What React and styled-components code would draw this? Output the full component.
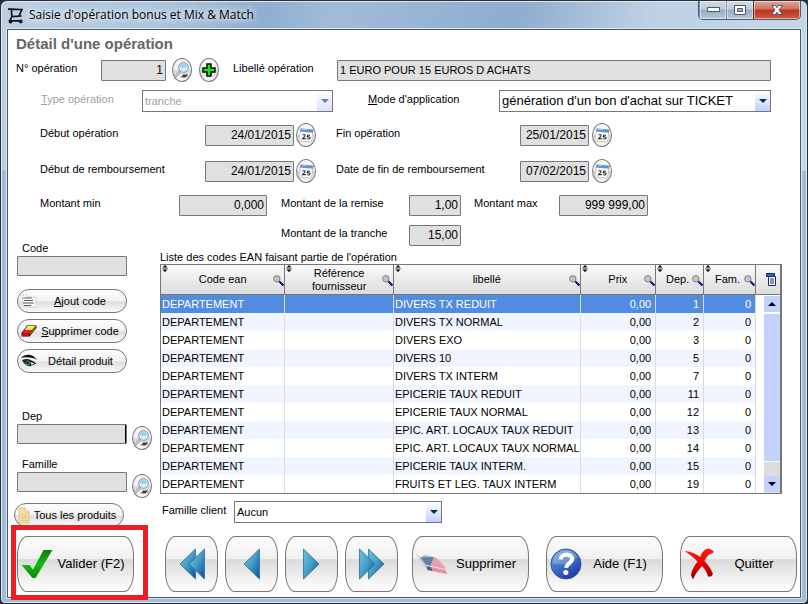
// App.jsx
import React, { useState } from "react";
import styled, { createGlobalStyle } from "styled-components";

const rows = [
  { code: "DEPARTEMENT", ref: "", label: "DIVERS TX REDUIT", price: "0,00", dep: 1, fam: 0 },
  { code: "DEPARTEMENT", ref: "", label: "DIVERS TX NORMAL", price: "0,00", dep: 2, fam: 0 },
  { code: "DEPARTEMENT", ref: "", label: "DIVERS EXO", price: "0,00", dep: 3, fam: 0 },
  { code: "DEPARTEMENT", ref: "", label: "DIVERS 10", price: "0,00", dep: 5, fam: 0 },
  { code: "DEPARTEMENT", ref: "", label: "DIVERS TX INTERM", price: "0,00", dep: 7, fam: 0 },
  { code: "DEPARTEMENT", ref: "", label: "EPICERIE TAUX REDUIT", price: "0,00", dep: 11, fam: 0 },
  { code: "DEPARTEMENT", ref: "", label: "EPICERIE TAUX NORMAL", price: "0,00", dep: 12, fam: 0 },
  { code: "DEPARTEMENT", ref: "", label: "EPIC. ART. LOCAUX TAUX REDUIT", price: "0,00", dep: 13, fam: 0 },
  { code: "DEPARTEMENT", ref: "", label: "EPIC. ART. LOCAUX TAUX NORMAL", price: "0,00", dep: 14, fam: 0 },
  { code: "DEPARTEMENT", ref: "", label: "EPICERIE TAUX INTERM.", price: "0,00", dep: 15, fam: 0 },
  { code: "DEPARTEMENT", ref: "", label: "FRUITS ET LEG. TAUX INTERM", price: "0,00", dep: 19, fam: 0 },
];

const columns = [
  { title: "Code ean", width: 125 },
  { title: "Référence fournisseur", width: 109 },
  { title: "libellé" },
  { title: "Prix", width: 76 },
  { title: "Dep.", width: 48 },
  { title: "Fam.", width: 52 },
];

// ---------- Icons ----------

const CartIcon = () => (
  <svg width="16" height="17" viewBox="0 0 16 17" fill="none" stroke="#111" strokeWidth="1.7">
    <path d="M0 2.2h3.5l9 0.3h2.5M3.3 2.2l0.6 7.4 9.6-0.6M13.8 2.5l-2.6 6.3M4 9.6L1.6 13.8h11.2" />
    <circle cx="2.6" cy="14.6" r="1" fill="#111" />
    <circle cx="12.8" cy="14.4" r="1" fill="#111" />
  </svg>
);

const SearchIcon = () => (
  <svg width="18" height="20" viewBox="0 0 18 20">
    <path d="M9 14.5l6-1 0.5 3.5-7 0.5z" fill="#888" opacity="0.6" />
    <path d="M8.5 16.8h4.5M10 15.4h4" stroke="#222" strokeWidth="1" />
    <path d="M6.8 11.2L2.4 16.6" stroke="#888" strokeWidth="2.4" strokeLinecap="round" />
    <path d="M6.6 11L2.6 16.2" stroke="#e4e4e4" strokeWidth="1.1" strokeLinecap="round" />
    <circle cx="10.5" cy="7.4" r="4.9" fill="#d6eef8" stroke="#8b979f" strokeWidth="1" />
    <path d="M6.2 7.5a4.3 4.3 0 0 1 8.6-.4c-3 1.5-5 0-8.6.4z" fill="#9fd2ea" />
  </svg>
);

const PlusIcon = () => (
  <svg width="14" height="14" viewBox="0 0 14 14">
    <path d="M5 1h4v4h4v4H9v4H5V9H1V5h4z" fill="#1ee01e" stroke="#101010" strokeWidth="1.5" />
  </svg>
);

const CalendarIcon = () => (
  <svg width="18" height="18" viewBox="0 0 18 18">
    <path d="M3.5 3l12.5 1-1.5 12-12.5-1z" fill="#fdfdfd" stroke="#b5b5b5" strokeWidth="0.7" />
    <path d="M3.5 2.5l13 1.2-.4 3-13-1.2z" fill="#5e90d2" />
    <path d="M4.5 2.6l5 .4v1.2l-5-.4z" fill="#a9c8ee" />
    <path
      d="M5.5 9c2-1.2 3.2 0 2.2 1.4l-2.2 2.2h3.3M13 9.2h-2.4l-.3 1.7c2.2-.5 3 .4 2.6 1.3-.4.9-2 1-2.9.4"
      fill="none"
      stroke="#333"
      strokeWidth="1.1"
    />
  </svg>
);

const ListIcon = () => (
  <svg width="16" height="14" viewBox="0 0 16 14">
    <path d="M1 1h5l1 2h8v10H2z" fill="#fff" stroke="#c4c4c4" strokeDasharray="2 1" />
    <path d="M2 4h9M3 6.5h9M2 9h11M3 11.5h7" stroke="#555" strokeWidth="1" />
  </svg>
);

const RubberIcon = () => (
  <svg width="16" height="12" viewBox="0 0 16 12">
    <path d="M6 .5h9.5v2.5L8.5 11.5H.5V8z" fill="#111" />
    <path d="M6.5 1h8L11 5H3.5z" fill="#ffe94a" />
    <path d="M3.5 5h7.3L8 8.5H1z" fill="#ee1c24" />
    <path d="M14.8 1.6v1.2L8.8 10v-1.5z" fill="#c9a800" />
    <path d="M1 9h7v1.8H1z" fill="#e01018" />
  </svg>
);

const EyeIcon = () => (
  <svg width="17" height="14" viewBox="0 0 17 14">
    <path d="M0 3.8C3 .6 9-.6 12.5 2.3l4 3.7C12 3.3 6 2.5 0 3.8z" fill="#111" />
    <path d="M1 6.3c4-2.5 9-1.3 14.5 3.2-2 .4-3.5 2.3-6 2.6C5.5 12.5 3 9.5 1 6.3z" fill="#222" />
    <path d="M9.5 8l4 1.6-3 1.5z" fill="#eee" />
    <circle cx="6.8" cy="9" r="2.4" fill="#2e7f88" />
    <circle cx="6.6" cy="8.6" r="1.1" fill="#000" />
  </svg>
);

const PageIcon = () => (
  <svg width="12" height="17" viewBox="0 0 12 17">
    <path d="M1 1h6l4 4v11H1z" fill="#f6dfa6" stroke="#dcb96d" strokeWidth="0.8" />
    <path d="M7 1v4h4z" fill="#fff4d4" stroke="#dcb96d" strokeWidth="0.6" />
    <path d="M2.5 7.5h7M2.5 9.5h7M2.5 11.5h7M2.5 13.5h7" stroke="#e3bf74" strokeWidth="0.7" />
  </svg>
);

const CheckIcon = () => (
  <svg width="32" height="30" viewBox="0 0 32 30">
    <defs>
      <linearGradient id="check" x1="0" y1="0" x2="0" y2="1">
        <stop offset="0" stopColor="#0a7a0a" />
        <stop offset="0.5" stopColor="#13b913" />
        <stop offset="1" stopColor="#0a8a0a" />
      </linearGradient>
    </defs>
    <path d="M0.5 16h8l3.5 4.5L22.5 1h9L14.5 29h-3z" fill="url(#check)" />
  </svg>
);

const EraserIcon = () => (
  <svg width="32" height="24" viewBox="0 0 32 24">
    <path d="M0 1.5l18 3.7 10 10 3.5 7-20-4.200z" fill="#e2929f" />
    <path d="M0 1.5L2 1l9 2.200-6 3.300z" fill="#f4f8fb" />
    <path d="M8 2.700l10 2.500-5 3.500-9-2z" fill="#a9c3d6" />
    <path d="M4 5.500l6-.5 8 .2-3.500 9L10.500 13z" fill="#5d84a3" />
    <path d="M0 1.500l4 4 7 8.500.5 4z" fill="#b9cad8" />
    <path d="M10.500 13.500l4.500 1 1.500 4.600-5-1z" fill="#41698c" />
    <path d="M18 5.200l3 1 9 10.300-12.500-2.500-3-.5z" fill="#e8a0ab" />
    <path d="M10 13.300l18.500 4" stroke="#fbe9ec" strokeWidth="1" />
  </svg>
);

const HelpIcon = () => (
  <svg width="32" height="32" viewBox="0 0 32 32">
    <defs>
      <linearGradient id="help" x1="0" y1="0" x2="0.6" y2="1">
        <stop offset="0" stopColor="#7fb0e8" />
        <stop offset="0.5" stopColor="#3f79c9" />
        <stop offset="1" stopColor="#2438ae" />
      </linearGradient>
    </defs>
    <circle cx="16" cy="16" r="15" fill="url(#help)" stroke="#2c4f9e" />
    <path d="M2.5 15a13.5 13.5 0 0 1 25-6.5C22 17 12 17.5 2.5 15z" fill="#fff" opacity="0.22" />
    <path
      d="M10.5 11.5c.5-6.5 12-6.3 11.5 0-.3 3.5-5.5 3.8-6 8.3"
      fill="none"
      stroke="#fff"
      strokeWidth="4.2"
    />
    <circle cx="15.8" cy="24.5" r="2.5" fill="#fff" />
  </svg>
);

const CrossIcon = () => (
  <svg width="32" height="32" viewBox="0 0 32 32">
    <defs>
      <linearGradient id="cross" x1="0" y1="0" x2="0" y2="1">
        <stop offset="0" stopColor="#ff1a10" />
        <stop offset="0.5" stopColor="#f00000" />
        <stop offset="1" stopColor="#7c0000" />
      </linearGradient>
    </defs>
    <path
      d="M.5 3C7 3.5 12 5.500 16 9 18 4 21 .5 25 .5L29.500 3 29 5c-4 .8-7 4-8.500 8 4 4.500 6.500 8 8.500 13l-2 2.500h-3c-1.500-5-3.500-8-6-10.500-3.500 4-7 8-9 13.500L7 27c.8-5 3.500-9.500 6.500-13.500C9.500 9 5 6 .5 3z"
      fill="url(#cross)"
    />
  </svg>
);

// Arrow heads for the record navigation, drawn one or two at a time
const NavArrow = ({ dir, double }) => {
  const id = `arrow-${dir}-${double ? 2 : 1}`;
  const width = double ? 26 : 17;
  const single = dir === "prev" ? ["M16.5 1v30L1 16z"] : ["M0.5 1v30L16 16z"];
  const pair =
    dir === "prev"
      ? ["M16.5 1v30L1 16z", "M25.5 1v30L10 16z"]
      : ["M9.5 1v30L25 16z", "M0.5 1v30L16 16z"];
  return (
    <svg width={width} height="32" viewBox={`0 0 ${width} 32`}>
      <defs>
        <linearGradient id={id} x1="0" y1="0" x2="1" y2="1">
          <stop offset="0" stopColor="#6cc4d6" />
          <stop offset="0.45" stopColor="#4ba3c8" />
          <stop offset="1" stopColor="#124a9a" />
        </linearGradient>
      </defs>
      {(double ? pair : single).map((d) => (
        <path key={d} d={d} fill={`url(#${id})`} stroke="#2c6f98" strokeWidth="0.8" />
      ))}
    </svg>
  );
};

const SortMark = () => (
  <svg width="6" height="7" viewBox="0 0 6 7">
    <path d="M3 0l2.5 2.5h-5zM3 7L.5 4.5h5z" fill="#000" />
    <path d="M0 3.5h6" stroke="#555" strokeWidth="0.6" />
  </svg>
);

const LensIcon = () => (
  <svg width="11" height="11" viewBox="0 0 11 11">
    <path d="M6 6l4.5 4.5" stroke="#1414c8" strokeWidth="2" />
    <path d="M6.5 7.5l3.5 3.5" stroke="#000" strokeWidth="0.6" />
    <circle cx="3.8" cy="3.8" r="3.2" fill="#c4c4c4" stroke="#808080" strokeWidth="1" />
  </svg>
);

const ColumnsIcon = () => (
  <svg width="10" height="13" viewBox="0 0 10 13">
    <path d="M.5.5h8v3h-8z" fill="#3c5fc4" stroke="#14276b" />
    <path d="M2.5 3.5h7v9h-7z" fill="#fff" stroke="#14276b" />
    <path d="M4 6h4M4 8h4M4 10h4" stroke="#14276b" />
  </svg>
);

const Chevron = () => (
  <svg width="8" height="4" viewBox="0 0 8 4">
    <path d="M0 0h8L4 4z" fill="#0b2a4a" />
  </svg>
);

const ScrollMark = ({ up }) => (
  <svg width="8" height="4" viewBox="0 0 8 4">
    <path d={up ? "M0 4h8L4 0z" : "M0 0h8L4 4z"} fill="#000" />
  </svg>
);

// ---------- Small pieces ----------

const ComboBox = ({ id, options, muted, size }) => (
  <Combo $muted={muted}>
    <Select id={id} disabled={muted} $size={size}>
      {options.map((o) => (
        <option key={o}>{o}</option>
      ))}
    </Select>
    <ComboArrow $muted={muted}>
      <Chevron />
    </ComboArrow>
  </Combo>
);

const CalendarButton = () => (
  <RoundButton type="button" aria-label="Calendrier">
    <CalendarIcon />
  </RoundButton>
);

const ProductTable = () => {
  const [selected, setSelected] = useState(0);

  return (
    <TableBox>
      <Table aria-labelledby="liste">
        <colgroup>
          {columns.map((c) => (
            <Col key={c.title} $width={c.width} />
          ))}
        </colgroup>
        <thead>
          <tr>
            {columns.map((c) => (
              <Th key={c.title} scope="col">
                <SortSlot>
                  <SortMark />
                </SortSlot>
                <HeadText>{c.title}</HeadText>
                <LensSlot>
                  <LensIcon />
                </LensSlot>
              </Th>
            ))}
          </tr>
        </thead>
        <tbody>
          {rows.map((r, i) => (
            <Tr key={r.label} $selected={i === selected} onClick={() => setSelected(i)}>
              <Td>{r.code}</Td>
              <Td>{r.ref}</Td>
              <Td>{r.label}</Td>
              <Td $right>{r.price}</Td>
              <Td $right>{r.dep}</Td>
              <Td $right>{r.fam}</Td>
            </Tr>
          ))}
        </tbody>
      </Table>
      <TableSide>
        <ColumnsButton type="button" aria-label="Colonnes">
          <ColumnsIcon />
        </ColumnsButton>
        <ScrollBar>
          <ScrollButton type="button" aria-label="Haut">
            <ScrollMark up />
          </ScrollButton>
          <ScrollThumb />
          <ScrollButton type="button" aria-label="Bas">
            <ScrollMark />
          </ScrollButton>
        </ScrollBar>
      </TableSide>
    </TableBox>
  );
};

const App = () => (
  <>
    <GlobalStyle />
    <Window>
      <TitleBar>
        <CartIcon />
        <WindowTitle>Saisie d'opération bonus et Mix &amp; Match</WindowTitle>
        <WindowButtons>
          <WindowButton type="button" aria-label="Réduire">
            <svg width="13" height="6" viewBox="0 0 13 6">
              <path d="M.5.5h12v4H.5z" fill="#fff" stroke="#4a5566" />
            </svg>
          </WindowButton>
          <WindowButton type="button" aria-label="Agrandir">
            <svg width="12" height="10" viewBox="0 0 12 10">
              <path d="M.5.5h11v9H.5zM3.5 3.5v3h5v-3z" fill="#fff" fillRule="evenodd" stroke="#4a5566" />
            </svg>
          </WindowButton>
          <WindowButton type="button" aria-label="Fermer" $close>
            <svg width="12" height="10" viewBox="0 0 12 10">
              <path
                d="M.7.5h3.5L6 2.7 7.8.5h3.5L8 5l3.3 4.5H7.8L6 7.3 4.2 9.5H.7L4 5z"
                fill="#fff"
                stroke="#4a5566"
                strokeWidth="0.9"
              />
            </svg>
          </WindowButton>
        </WindowButtons>
      </TitleBar>

      <Client>
        <Heading>Détail d'une opération</Heading>

        <FormRow $gap={5} $indent={8} $cols="85px 65px 6px 20px 7px 20px 14px 104px minmax(0, 1fr)">
          <Label htmlFor="numero">N° opération</Label>
          <Field id="numero" defaultValue="1" $right />
          <i />
          <RoundButton type="button" aria-label="Rechercher">
            <SearchIcon />
          </RoundButton>
          <i />
          <RoundButton type="button" aria-label="Ajouter">
            <PlusIcon />
          </RoundButton>
          <i />
          <Label htmlFor="libelle">Libellé opération</Label>
          <Field id="libelle" defaultValue="1 EURO POUR 15 EUROS D ACHATS" $size={11} />
        </FormRow>

        <FormRow $gap={7} $indent={33} $cols="101px 191px 35px 131px minmax(0, 1fr)">
          <Label htmlFor="type" $muted>
            <u>T</u>ype opération
          </Label>
          <ComboBox id="type" options={["tranche", "montant"]} muted />
          <i />
          <Label htmlFor="mode">
            <u>M</u>ode d'application
          </Label>
          <ComboBox
            id="mode"
            size={13}
            options={["génération d'un bon d'achat sur TICKET", "remise immédiate"]}
          />
        </FormRow>

        <FormRow $gap={10} $indent={32} $cols="165px 89px 2px 20px 20px 184px 69px 3px 20px">
          <Label htmlFor="debut">Début opération</Label>
          <Field id="debut" defaultValue="24/01/2015" $right />
          <i />
          <CalendarButton />
          <i />
          <Label htmlFor="fin">Fin opération</Label>
          <Field id="fin" defaultValue="25/01/2015" $right />
          <i />
          <CalendarButton />
        </FormRow>

        <FormRow $gap={12} $indent={32} $cols="165px 89px 2px 20px 20px 184px 69px 3px 20px">
          <Label htmlFor="debutRemb">Début de remboursement</Label>
          <Field id="debutRemb" defaultValue="24/01/2015" $right />
          <i />
          <CalendarButton />
          <i />
          <Label htmlFor="finRemb">Date de fin de remboursement</Label>
          <Field id="finRemb" defaultValue="07/02/2015" $right />
          <i />
          <CalendarButton />
        </FormRow>

        <FormRow $gap={10} $indent={32} $cols="139px 88px 14px 128px 52px 13px 85px 89px">
          <Label htmlFor="min">Montant min</Label>
          <Field id="min" defaultValue="0,000" $right />
          <i />
          <Label htmlFor="remise">Montant de la remise</Label>
          <Field id="remise" defaultValue="1,00" $right />
          <i />
          <Label htmlFor="max">Montant max</Label>
          <Field id="max" defaultValue="999 999,00" $right />
        </FormRow>

        <Body>
          <SidePanel>
            <SideLabel htmlFor="code">Code</SideLabel>
            <SideField id="code" />
            <ButtonStack>
              <PillButton type="button">
                <ListIcon />
                <span>
                  <u>A</u>jout code
                </span>
              </PillButton>
              <PillButton type="button">
                <RubberIcon />
                <span>
                  <u>S</u>upprimer code
                </span>
              </PillButton>
              <PillButton type="button">
                <EyeIcon />
                <span>Détail produit</span>
              </PillButton>
            </ButtonStack>

            <SideLabel htmlFor="dep">Dep</SideLabel>
            <LookupRow>
              <SideField id="dep" $current />
              <RoundButton type="button" aria-label="Rechercher un département">
                <SearchIcon />
              </RoundButton>
            </LookupRow>
            <SideLabel htmlFor="famille">Famille</SideLabel>
            <LookupRow>
              <SideField id="famille" />
              <RoundButton type="button" aria-label="Rechercher une famille">
                <SearchIcon />
              </RoundButton>
            </LookupRow>
            <AllProducts type="button">
              <PageIcon />
              <span>Tous les produits</span>
            </AllProducts>
          </SidePanel>

          <MainPanel>
            <FormRow $gap={6} $indent={121} $cols="128px 52px">
              <Label htmlFor="tranche">Montant de la tranche</Label>
              <Field id="tranche" defaultValue="15,00" $right />
            </FormRow>
            <ListTitle id="liste">Liste des codes EAN faisant partie de l'opération</ListTitle>
            <ProductTable />
            <ClientRow>
              <Label htmlFor="client">Famille client</Label>
              <ComboBox id="client" options={["Aucun", "Tous"]} />
            </ClientRow>
          </MainPanel>
        </Body>

        <Footer>
          <Highlight>
            <BigButton type="button">
              <CheckIcon />
              <span>Valider (F2)</span>
            </BigButton>
          </Highlight>
          <NavGroup>
            <NavButton type="button" aria-label="Premier">
              <NavArrow dir="prev" double />
            </NavButton>
            <NavButton type="button" aria-label="Précédent">
              <NavArrow dir="prev" />
            </NavButton>
            <NavButton type="button" aria-label="Suivant">
              <NavArrow dir="next" />
            </NavButton>
            <NavButton type="button" aria-label="Dernier">
              <NavArrow dir="next" double />
            </NavButton>
          </NavGroup>
          <ActionGroup>
            <BigButton type="button">
              <EraserIcon />
              <span>Supprimer</span>
            </BigButton>
            <BigButton type="button">
              <HelpIcon />
              <span>Aide (F1)</span>
            </BigButton>
            <BigButton type="button">
              <CrossIcon />
              <span>Quitter</span>
            </BigButton>
          </ActionGroup>
        </Footer>
      </Client>
    </Window>
  </>
);

export default App;

// ---------- Styled Components ----------

const GlobalStyle = createGlobalStyle`
  * {
    box-sizing: border-box;
  }

  body {
    margin: 0;
    background: #2b2f36;
    color: #000;
    font: 11px/14px "Liberation Sans", Arial, sans-serif;
  }

  input, select, button {
    font: inherit;
    color: inherit;
    margin: 0;
  }

  svg {
    display: block;
    flex: none;
  }
`;

const Window = styled.div`
  min-height: 100vh;
  display: flex;
  flex-direction: column;
  padding: 0 6px 5px;
  border: 1px solid #2b2f36;
  border-radius: 7px 7px 5px 5px;
  box-shadow: inset 0 0 0 1px #dce8f4;
  background:
    linear-gradient(100deg, rgba(255, 255, 255, 0.3), rgba(255, 255, 255, 0.1) 20%, rgba(70, 110, 160, 0.18) 32%, transparent 40%, rgba(70, 110, 160, 0.2) 62%, rgba(255, 255, 255, 0.3) 78%, rgba(255, 255, 255, 0.4)) 0 0 / 100% 170px no-repeat,
    #a1bcd9;
`;

const TitleBar = styled.header`
  height: 28px;
  display: flex;
  align-items: center;
  gap: 5px;
  padding-left: 1px;
`;

const WindowTitle = styled.div`
  flex: 1;
  font-family: "Open Sans", "Noto Sans", sans-serif;
  font-size: 12px;
  line-height: 16px;
  text-shadow: 0 0 6px #fff, 0 0 8px #fff;
`;

const WindowButtons = styled.div`
  display: flex;
  align-self: flex-start;
  height: 19px;
  border: 1px solid #4c5a6c;
  border-top: 0;
  border-radius: 0 0 5px 5px;
  overflow: hidden;
`;

const WindowButton = styled.button`
  width: ${({ $close }) => ($close ? "47px" : "27px")};
  display: flex;
  align-items: center;
  justify-content: center;
  padding: 0;
  border: 0;
  border-left: ${({ $close }) => ($close ? "1px solid #4c2a2a" : "1px solid #7c8ca0")};
  box-shadow: inset 0 0 0 1px rgba(255, 255, 255, 0.5);
  background: ${({ $close }) =>
    $close
      ? "linear-gradient(#e3a598, #d0705f 45%, #b93320 50%, #cf5a40)"
      : "linear-gradient(#d3dce6, #bccad9 45%, #98abc2 50%, #b6c8dc)"};
`;

const Client = styled.main`
  flex: 1;
  display: flex;
  flex-direction: column;
  padding: 5px 3px 5px 0;
  border: 1px solid #47586b;
  box-shadow: 0 0 0 1px #dce8f4;
  background: #fff;
`;

const Heading = styled.h1`
  margin: 0;
  padding-left: 8px;
  color: #666;
  font-size: 15px;
  line-height: 18px;
  font-weight: bold;
`;

const FormRow = styled.div`
  display: grid;
  grid-template-columns: ${({ $cols }) => $cols};
  align-items: center;
  height: 24px;
  margin-top: ${({ $gap }) => $gap}px;
  padding-left: ${({ $indent }) => $indent}px;
  padding-right: 26px;
`;

const Label = styled.label`
  padding-bottom: 4px;
  white-space: nowrap;
  color: ${({ $muted }) => ($muted ? "#a0a0a0" : "#000")};
`;

const Field = styled.input`
  width: 100%;
  min-width: 0;
  height: 21px;
  padding: 0 2px;
  border: 1px solid #777;
  border-radius: 1px;
  background: #e0e0e0;
  box-shadow: ${({ $current }) => ($current ? "inset -1px 0 0 #000" : "none")};
  font-size: ${({ $size }) => $size || 12}px;
  text-align: ${({ $right }) => ($right ? "right" : "left")};
`;

const Combo = styled.div`
  position: relative;
  display: flex;
  border: 1px solid #777;
  background: #fff;
  color: ${({ $muted }) => ($muted ? "#a0a0a0" : "#000")};
`;

const Select = styled.select`
  appearance: none;
  width: 100%;
  height: 20px;
  padding: 0 16px 0 2px;
  border: 0;
  opacity: 1;
  background: transparent;
  font-size: ${({ $size }) => $size || 11}px;
`;

const ComboArrow = styled.span`
  position: absolute;
  top: 0;
  right: 0;
  bottom: 0;
  width: 15px;
  display: flex;
  align-items: center;
  justify-content: center;
  background: linear-gradient(#fff, #bfd0fb);
  opacity: ${({ $muted }) => ($muted ? 0.6 : 1)};
  pointer-events: none;
`;

const RoundButton = styled.button`
  width: 20px;
  height: 24px;
  display: flex;
  align-items: center;
  justify-content: center;
  padding: 0;
  border: 1px solid #777;
  border-radius: 50%;
  background: linear-gradient(#fafafa, #eee 48%, #d6d6d6 52%, #fafafa);
`;

const Body = styled.div`
  flex: 1;
  display: grid;
  grid-template-columns: 152px minmax(0, 1fr);
`;

const SidePanel = styled.div`
  padding: 24px 8px 0 9px;
`;

const SideLabel = styled.label`
  display: block;
  padding: 0 0 1px 5px;
`;

const SideField = styled(Field)`
  display: block;
  width: 110px;
  height: 20px;
`;

const ButtonStack = styled.div`
  display: flex;
  flex-direction: column;
  gap: 6px;
  margin: 13px 0 36px;
`;

const LookupRow = styled.div`
  display: flex;
  justify-content: space-between;
  height: 26px;
  margin-bottom: 7px;

  ${RoundButton} {
    align-self: flex-end;
  }
`;

const PillButton = styled.button`
  width: 110px;
  height: 24px;
  display: flex;
  align-items: center;
  padding: 0 3px;
  border: 1px solid #777;
  border-radius: 12px;
  background: linear-gradient(#fcfcfc, #f2f2f2 50%, #dedede 54%, #fafafa);
  white-space: nowrap;

  span {
    flex: 1;
    text-align: center;
  }
`;

const AllProducts = styled(PillButton)`
  margin: -2px 0 0 -3px;
`;

const MainPanel = styled.div`
  min-width: 0;
  padding-right: 15px;
`;

const ListTitle = styled.div`
  margin-top: 3px;
  white-space: nowrap;
`;

const TableBox = styled.div`
  display: flex;
  border: 1px solid #777;
  border-right-width: 2px;
`;

const Table = styled.table`
  flex: 1;
  min-width: 0;
  table-layout: fixed;
  border-collapse: separate;
  border-spacing: 0;
`;

const Col = styled.col`
  width: ${({ $width }) => ($width ? `${$width}px` : "auto")};
`;

const Th = styled.th`
  position: relative;
  height: 30px;
  padding: 0;
  border-right: 1px solid #777;
  border-bottom: 1px solid #777;
  background: linear-gradient(#fafafa, #dcdcdc);
  font-weight: normal;
`;

const HeadText = styled.span`
  display: block;
  margin: 0 12px;
  padding: 0 4px;
  line-height: 13px;

  th:nth-child(n + 5) & {
    margin: 0 12px 0 8px;
    padding: 0;
  }
`;

const SortSlot = styled.span`
  position: absolute;
  top: 0;
  left: 1px;
`;

const LensSlot = styled.span`
  position: absolute;
  right: 0;
  top: 10px;
`;

const Tr = styled.tr`
  height: 18px;
  background: ${({ $selected }) => ($selected ? "#528ce0" : "#fff")};
  color: ${({ $selected }) => ($selected ? "#fff" : "#000")};

  &:nth-child(even) {
    background: ${({ $selected }) => ($selected ? "#528ce0" : "#f0f5ff")};
  }
`;

const Td = styled.td`
  height: 18px;
  padding: ${({ $right }) => ($right ? "0 4px 0 0" : "0 0 0 1px")};
  border-right: 1px solid #dcdcdc;
  line-height: 16px;
  white-space: nowrap;
  text-align: ${({ $right }) => ($right ? "right" : "left")};
`;

const TableSide = styled.div`
  display: flex;
  flex-direction: column;
  width: 24px;
`;

const ColumnsButton = styled.button`
  height: 30px;
  display: flex;
  align-items: center;
  justify-content: center;
  padding: 0 0 0 6px;
  border: 0;
  border-bottom: 1px solid #777;
  background: linear-gradient(#fafafa, #dcdcdc);
`;

const ScrollBar = styled.div`
  flex: 1;
  display: flex;
  flex-direction: column;
  width: 16px;
  margin-left: 8px;
  padding: 1px 0;
  background: linear-gradient(#fff 30px, #dcdcdc 30px);
`;

const ScrollButton = styled.button`
  height: 16px;
  display: flex;
  align-items: center;
  justify-content: center;
  padding: 0;
  border: 0;
  background: #c2d2fc;
`;

const ScrollThumb = styled.div`
  flex: 1;
  margin-bottom: 14px;
  border: solid #fff;
  border-width: 2px 0 1px;
  background: #c2d2fc;
`;

const ClientRow = styled.div`
  display: grid;
  grid-template-columns: 72px 208px;
  align-items: center;
  margin-top: 7px;
  padding-left: 2px;
`;

const Footer = styled.footer`
  display: flex;
  margin-top: 7px;
  padding-left: 9px;
`;

const Highlight = styled.div`
  position: relative;

  &::after {
    content: "";
    position: absolute;
    inset: -11px -14px -8px -6px;
    border: 5px solid #ee1c24;
    pointer-events: none;
  }
`;

const NavGroup = styled.div`
  display: flex;
  gap: 7px;
  margin-left: 31px;
`;

const ActionGroup = styled.div`
  flex: 1;
  display: flex;
  justify-content: flex-end;
  gap: 17px;
`;

const NavButton = styled.button`
  width: 53px;
  height: 56px;
  display: flex;
  align-items: center;
  justify-content: center;
  padding: 0;
  border: 1px solid #777;
  border-radius: 10px / 20px;
  background: linear-gradient(#fcfcfc, #f0f0f0 40%, #dadada 42%, #e6e6e6 60%, #fff);
`;

const BigButton = styled(NavButton)`
  width: 117px;
  padding: 0 4px 0 3px;
  font-size: 13px;
  white-space: nowrap;

  span {
    flex: 1;
    text-align: center;
  }
`;
